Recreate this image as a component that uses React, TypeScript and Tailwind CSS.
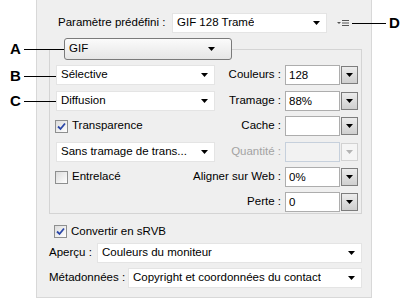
import React from 'react'

const font = { fontFamily: '"Liberation Sans", Arial, sans-serif' }

export default function App() {
  return (
    <div className="relative w-[412px] h-[301px] bg-white overflow-hidden text-[11.5px] text-black" style={font}>
      {/* PANNEAU */}
      <div className="ml-[36px] w-[336px] h-[298px] bg-[#efefef] border border-t-0 border-[#d8d8d8] pl-[12px] pt-[13px]">
        {/* Paramètre prédéfini */}
        <div className="flex items-center h-[20px]">
          <span className="w-[123px] pl-[9px]">Paramètre prédéfini :</span>
          <Select text="GIF 128 Tramé" className="w-[155px]" />
          <MenuIcon />
        </div>

        {/* GROUPE GIF */}
        <div className="mt-[16px] w-[313px] border border-[#d4d4d4] pb-[1px]">
          <div className="-mt-[12px] ml-[14px] w-[168px] h-[22px] rounded-[3px] border border-[#7a7a7a] bg-gradient-to-b from-[#fbfbfb] to-[#e6e6e6] flex items-center justify-between pl-[4px] pr-[16px]">
            <span>GIF</span>
            <Arrow />
          </div>

          <div className="pl-[6px] pr-[3px]">
            <Row className="mt-[5px]" left={<Select text="Sélective" className="w-[159px]" />} label="Couleurs :" value="128" />
            <Row className="mt-[6px]" left={<Select text="Diffusion" className="w-[159px]" />} label="Tramage :" value="88%" />
            <Row className="mt-[5px]" left={<Check checked label="Transparence" />} label="Cache :" value="" />
            <Row className="mt-[6px]" left={<Select text="Sans tramage de trans..." className="w-[159px]" />} label="Quantité :" value="" disabled />
            <Row className="mt-[5px]" left={<Check label="Entrelacé" />} label="Aligner sur Web :" value="0%" />
            <Row className="mt-[5px]" left={<span />} label="Perte :" value="0" />
          </div>
        </div>

        <div className="mt-[11px] pl-[6px]">
          <Check checked label="Convertir en sRVB" />
        </div>

        <div className="mt-[5px] flex items-center">
          <span className="w-[48px]">Aperçu :</span>
          <Select text="Couleurs du moniteur" className="w-[265px]" />
        </div>
        <div className="mt-[5px] flex items-center">
          <span className="w-[79px]">Métadonnées :</span>
          <Select text="Copyright et coordonnées du contact" className="w-[234px]" />
        </div>
      </div>

      {/* REPÈRES */}
      <Callout letter="A" y={49} to={64} />
      <Callout letter="B" y={76} to={56} />
      <Callout letter="C" y={101} to={56} />
      <div className="absolute left-[352px] top-[23px] w-[34px] h-px bg-black" />
      <span className="absolute left-[389px] top-[14px] text-[15px] font-bold leading-[18px]">D</span>
    </div>
  )
}

function Row({ left, label, value, disabled, className }: any) {
  return (
    <div className={`flex items-center justify-between h-[20px] ${className}`}>
      {left}
      <div className="flex items-center gap-[4px]">
        <span className={disabled ? 'text-[#a3a3a3]' : ''}>{label}</span>
        <Combo value={value} disabled={disabled} />
      </div>
    </div>
  )
}

function Select({ text, className }: any) {
  return (
    <div className={`h-[20px] bg-white border border-[#e4e4e4] flex items-center justify-between pl-[4px] pr-[6px] ${className}`}>
      <span className="truncate">{text}</span>
      <Arrow />
    </div>
  )
}

function Combo({ value, disabled }: any) {
  return (
    <div className="flex items-center">
      <div className={disabled ? 'w-[55px] h-[20px] border border-[#c6d0dc] bg-[#f2f2f2]' : 'w-[55px] h-[20px] border border-[#adadad] bg-white pl-[3px] leading-[18px]'}>
        {value}
      </div>
      <div className={disabled ? 'ml-[1px] w-[17px] h-[18px] border border-[#d2d2d2] bg-[#f5f5f5] flex items-center justify-center' : 'ml-[1px] w-[17px] h-[18px] border border-[#7d7d7d] bg-gradient-to-b from-[#ececec] to-[#cfcfcf] flex items-center justify-center'}>
        <Arrow color={disabled ? '#b4b4b4' : '#000'} />
      </div>
    </div>
  )
}

function Check({ checked, label }: any) {
  return (
    <div className="flex items-center gap-[4px] -ml-[1px] h-[13px]">
      <span className="w-[13px] h-[13px] border border-[#8e8f8f] bg-gradient-to-br from-[#dcdcdc] to-white flex items-center justify-center">
        {checked && (
          <svg width="9" height="9" viewBox="0 0 9 9">
            <path d="M1 4.5 L3.5 7 L8 1.5" fill="none" stroke="#2b47a8" strokeWidth="1.8" />
          </svg>
        )}
      </span>
      <span>{label}</span>
    </div>
  )
}

function Arrow({ color = '#000' }: any) {
  return (
    <svg width="7" height="4" viewBox="0 0 7 4">
      <path d="M0 0h7L3.5 4z" fill={color} />
    </svg>
  )
}

function MenuIcon() {
  return (
    <svg className="ml-[10px]" width="13" height="8" viewBox="0 0 13 8">
      <path d="M0 3h4L2 5z" fill="#555" />
      <path d="M5 1.5h7M5 4h7M5 6.5h7" stroke="#555" strokeWidth="1" />
    </svg>
  )
}

function Callout({ letter, y, to }: any) {
  return (
    <>
      <span className="absolute left-[10px] text-[15px] font-bold leading-[18px]" style={{ top: y - 9 }}>{letter}</span>
      <div className="absolute left-[24px] h-px bg-black" style={{ top: y, width: to - 24 }} />
    </>
  )
}
